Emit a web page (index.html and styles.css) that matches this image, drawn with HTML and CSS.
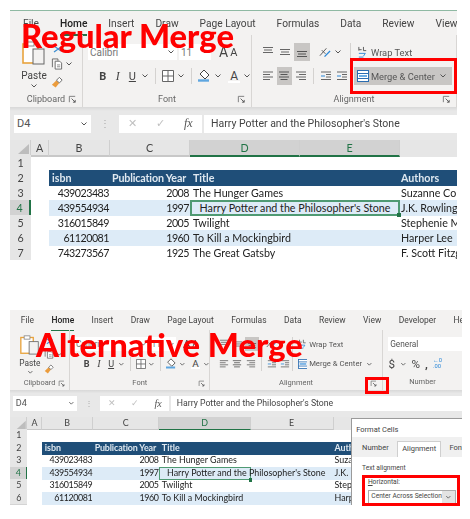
FILE: index.html
```html
<!DOCTYPE html>
<html lang="en">
<head>
<meta charset="utf-8">
<title>Regular Merge and Alternative Merge</title>
<link rel="stylesheet" href="styles.css">
</head>
<body>
<svg class="defs" xmlns="http://www.w3.org/2000/svg">
  <symbol id="chev" viewBox="0 0 8 8"><path d="M1.500 2.500 4 5l2.500-2.500" fill="none" stroke="#555" stroke-width="1"/></symbol>
  <symbol id="launch" viewBox="0 0 10 10"><path d="M1.500 8V1.500H8" fill="none" stroke="#777"/><path d="M4 4l4 4M8 5.500V8H5.500" fill="none" stroke="#555"/></symbol>
  <symbol id="paste" viewBox="0 0 24 26"><rect x="1" y="3" width="15" height="19" fill="#fff" stroke="#e8a33d" stroke-width="1.600"/><rect x="5" y="1" width="7" height="4" fill="#fff" stroke="#888"/><rect x="11" y="8" width="11" height="15" fill="#f3f2f1" stroke="#666"/></symbol>
  <symbol id="cut" viewBox="0 0 10 8"><path d="M1 1l7 5M1 7l7-5" stroke="#3d8fd1" stroke-width="1.300" fill="none"/></symbol>
  <symbol id="copy" viewBox="0 0 12 13"><path d="M1 10V1h6v2" fill="none" stroke="#666"/><path d="M4 3.500h5l2 2V12H4z" fill="#fff" stroke="#666"/><path d="M6 7.500h3.500M6 9.500h3.500" stroke="#888"/></symbol>
  <symbol id="brush" viewBox="0 0 14 14"><path d="M1 10l5-5 3 3-4 5z" fill="#eb9c3c"/><path d="M6 5l3-3 3 3-3 3z" fill="#fff" stroke="#666"/></symbol>
  <symbol id="borders" viewBox="0 0 12 12"><path d="M.500.500h11v11H.500zM6 .500v11M.500 6h11" fill="#fff" stroke="#666"/></symbol>
  <symbol id="fill" viewBox="0 0 13 14"><path d="M6 1l5 5-4 4-5-5z" fill="#fff" stroke="#444"/><path d="M0 11.500h11" stroke="#5ea6e0" stroke-width="2.400"/></symbol>
  <symbol id="ab" viewBox="0 0 11 13"><path d="M1 5V1M1 4h3M6 1v4h3" stroke="#555" fill="none"/><path d="M1 8h7l-2 3M1 12h5" stroke="#2b88d8" fill="none"/></symbol>
  <symbol id="orient" viewBox="0 0 13 12"><path d="M1 10L8 2M3 4l4 4" stroke="#555" fill="none"/><path d="M6 11L12 5" stroke="#2b88d8" stroke-width="1.400"/></symbol>
  <symbol id="merge" viewBox="0 0 12 12"><rect x=".5" y=".5" width="11" height="11" fill="#fff" stroke="#2b6cb0"/><path d="M.500 3.500h11M.500 8.500h11" stroke="#2b6cb0"/><path d="M2 6h8" stroke="#2b88d8" stroke-width="1.400"/></symbol>
  <symbol id="top" viewBox="0 0 12 12"><path d="M1 1.500h10M2 4h8M1 6.500h10" stroke="#666"/></symbol>
  <symbol id="mid" viewBox="0 0 12 12"><path d="M1 3.500h10M2 6h8M1 8.500h10" stroke="#666"/></symbol>
  <symbol id="bot" viewBox="0 0 12 12"><path d="M1 5.500h10M2 8h8M1 10.500h10" stroke="#555"/></symbol>
  <symbol id="left" viewBox="0 0 12 12"><path d="M1 2h10M1 4.500h7M1 7h10M1 9.500h7" stroke="#666"/></symbol>
  <symbol id="center" viewBox="0 0 12 12"><path d="M1 2h10M2.500 4.500h7M1 7h10M2.500 9.500h7" stroke="#555"/></symbol>
  <symbol id="right" viewBox="0 0 12 12"><path d="M1 2h10M4 4.500h7M1 7h10M4 9.500h7" stroke="#666"/></symbol>
  <symbol id="indl" viewBox="0 0 12 12"><path d="M1 2h10M6 4.500h5M6 7h5M1 9.500h10" stroke="#666"/><path d="M1 6h4" stroke="#2b88d8"/></symbol>
  <symbol id="indr" viewBox="0 0 12 12"><path d="M1 2h10M6 4.500h5M6 7h5M1 9.500h10" stroke="#666"/><path d="M1 6h4" stroke="#2b88d8"/></symbol>
  <symbol id="corner" viewBox="0 0 14 12"><path d="M13 1v10H2z" fill="#bdbdbd"/></symbol>
</svg>

<main class="page">
  <section class="figure figure-regular">
    <div class="shot">
      <nav class="tabs"><span>File</span><span class="tab-on">Home</span><span>Insert</span><span>Draw</span><span>Page Layout</span><span>Formulas</span><span>Data</span><span>Review</span><span>View</span></nav>
      <div class="groups">
        <div class="group g-clip">
          <div class="body clip-body">
            <div class="paste"><svg class="i-paste"><use href="#paste"/></svg><span>Paste</span><svg class="i-c"><use href="#chev"/></svg></div>
            <div class="clip-tools"><svg class="i-cut"><use href="#cut"/></svg><div class="tool-row"><svg class="i-12"><use href="#copy"/></svg><svg class="i-c"><use href="#chev"/></svg></div><svg class="i-14"><use href="#brush"/></svg></div>
          </div>
          <div class="label"><span></span><span>Clipboard</span><svg class="launch"><use href="#launch"/></svg></div>
        </div>
        <div class="group g-font">
          <div class="body font-body">
            <div class="frow"><div class="fbox fname">Calibri<svg class="i-c"><use href="#chev"/></svg></div><div class="fbox fsize">11<svg class="i-c"><use href="#chev"/></svg></div><span class="bigA">A</span><span class="smallA">A</span></div>
            <div class="frow frow2"><b class="fmt">B</b><i class="fmt serif">I</i><u class="fmt">U</u><svg class="i-c"><use href="#chev"/></svg><span class="sep"></span><svg class="i-12"><use href="#borders"/></svg><svg class="i-c"><use href="#chev"/></svg><span class="sep"></span><svg class="i-14"><use href="#fill"/></svg><svg class="i-c"><use href="#chev"/></svg><span class="colorA">A</span><svg class="i-c"><use href="#chev"/></svg></div>
          </div>
          <div class="label"><span></span><span>Font</span><svg class="launch"><use href="#launch"/></svg></div>
        </div>
        <div class="group g-align">
          <div class="body align-body">
            <div class="align-icons">
              <div class="arow"><span class="ib"><svg class="i-12"><use href="#top"/></svg></span><span class="ib"><svg class="i-12"><use href="#mid"/></svg></span><span class="ib ib-on"><svg class="i-12"><use href="#bot"/></svg></span><span class="ib ib-gap"><svg class="i-12"><use href="#orient"/></svg></span><svg class="i-c"><use href="#chev"/></svg></div>
              <div class="arow"><span class="ib"><svg class="i-12"><use href="#left"/></svg></span><span class="ib ib-on"><svg class="i-12"><use href="#center"/></svg></span><span class="ib"><svg class="i-12"><use href="#right"/></svg></span><span class="sep"></span><span class="ib"><svg class="i-12"><use href="#indl"/></svg></span><span class="ib"><svg class="i-12"><use href="#indr"/></svg></span></div>
            </div>
            <span class="sep sep-tall"></span>
            <div class="align-cmds">
              <div class="cmd"><svg class="i-12"><use href="#ab"/></svg>Wrap Text</div>
              <div class="cmd cmd-on"><svg class="i-12"><use href="#merge"/></svg>Merge &amp; Center<svg class="i-c cmd-c"><use href="#chev"/></svg></div>
            </div>
          </div>
          <div class="label"><span></span><span>Alignment</span><svg class="launch"><use href="#launch"/></svg></div>
        </div>
      </div>
      <div class="fbar">
        <div class="namebox">D4<svg class="i-c"><use href="#chev"/></svg></div>
        <span class="dots">⋮</span>
        <div class="fxbox"><span>✕</span><span>✓</span><i>fx</i></div>
        <div class="formula">Harry Potter and the Philosopher's Stone</div>
      </div>
      <div class="row colhead"><span class="cnr"><svg class="i-corner"><use href="#corner"/></svg></span><span>A</span><span>B</span><span>C</span><span class="col-on">D</span><span class="col-on">E</span><span class="col-end"></span></div>
      <div class="row"><span class="rh">1</span></div>
      <div class="row thead"><span class="rh">2</span><span></span><span>isbn</span><span>Publication Year</span><span class="tx">Title</span><span></span><span class="tx">Authors</span></div>
      <div class="row"><span class="rh">3</span><span></span><span class="num">439023483</span><span class="num">2008</span><span class="tx">The Hunger Games</span><span></span><span class="tx">Suzanne Collins</span></div>
      <div class="row band"><span class="rh rh-on">4</span><span></span><span class="num">439554934</span><span class="num">1997</span><span class="sel sel-wide">Harry Potter and the Philosopher's Stone</span><span class="tx">J.K. Rowling, Mary</span></div>
      <div class="row"><span class="rh">5</span><span></span><span class="num">316015849</span><span class="num">2005</span><span class="tx">Twilight</span><span></span><span class="tx">Stephenie Meyer</span></div>
      <div class="row band"><span class="rh">6</span><span></span><span class="num">61120081</span><span class="num">1960</span><span class="tx">To Kill a Mockingbird</span><span></span><span class="tx">Harper Lee</span></div>
      <div class="row"><span class="rh">7</span><span></span><span class="num">743273567</span><span class="num">1925</span><span class="tx">The Great Gatsby</span><span></span><span class="tx">F. Scott Fitzgerald</span></div>
    </div>
    <div class="overlay-title title-regular">Regular Merge</div>
    <div class="redbox box-merge"></div>
  </section>

  <section class="figure figure-alt">
    <div class="shot">
      <nav class="tabs"><span>File</span><span class="tab-on">Home</span><span>Insert</span><span>Draw</span><span>Page Layout</span><span>Formulas</span><span>Data</span><span>Review</span><span>View</span><span>Developer</span><span>Help</span></nav>
      <div class="groups">
        <div class="group g-clip">
          <div class="body clip-body">
            <div class="paste"><svg class="i-paste"><use href="#paste"/></svg><span>Paste</span><svg class="i-c"><use href="#chev"/></svg></div>
            <div class="clip-tools"><svg class="i-cut"><use href="#cut"/></svg><div class="tool-row"><svg class="i-12"><use href="#copy"/></svg><svg class="i-c"><use href="#chev"/></svg></div><svg class="i-14"><use href="#brush"/></svg></div>
          </div>
          <div class="label"><span></span><span>Clipboard</span><svg class="launch"><use href="#launch"/></svg></div>
        </div>
        <div class="group g-font">
          <div class="body font-body">
            <div class="frow"><div class="fbox fname">Calibri<svg class="i-c"><use href="#chev"/></svg></div><div class="fbox fsize">11<svg class="i-c"><use href="#chev"/></svg></div><span class="bigA">A</span><span class="smallA">A</span></div>
            <div class="frow frow2"><b class="fmt">B</b><i class="fmt serif">I</i><u class="fmt">U</u><svg class="i-c"><use href="#chev"/></svg><span class="sep"></span><svg class="i-12"><use href="#borders"/></svg><svg class="i-c"><use href="#chev"/></svg><span class="sep"></span><svg class="i-14"><use href="#fill"/></svg><svg class="i-c"><use href="#chev"/></svg><span class="colorA">A</span><svg class="i-c"><use href="#chev"/></svg></div>
          </div>
          <div class="label"><span></span><span>Font</span><svg class="launch"><use href="#launch"/></svg></div>
        </div>
        <div class="group g-align">
          <div class="body align-body">
            <div class="align-icons">
              <div class="arow"><span class="ib"><svg class="i-12"><use href="#top"/></svg></span><span class="ib"><svg class="i-12"><use href="#mid"/></svg></span><span class="ib ib-on"><svg class="i-12"><use href="#bot"/></svg></span><span class="ib ib-gap"><svg class="i-12"><use href="#orient"/></svg></span><svg class="i-c"><use href="#chev"/></svg></div>
              <div class="arow"><span class="ib"><svg class="i-12"><use href="#left"/></svg></span><span class="ib"><svg class="i-12"><use href="#center"/></svg></span><span class="ib"><svg class="i-12"><use href="#right"/></svg></span><span class="sep"></span><span class="ib"><svg class="i-12"><use href="#indl"/></svg></span><span class="ib"><svg class="i-12"><use href="#indr"/></svg></span></div>
            </div>
            <span class="sep sep-tall"></span>
            <div class="align-cmds">
              <div class="cmd"><svg class="i-12"><use href="#ab"/></svg>Wrap Text</div>
              <div class="cmd"><svg class="i-12"><use href="#merge"/></svg>Merge &amp; Center<svg class="i-c cmd-c"><use href="#chev"/></svg></div>
            </div>
          </div>
          <div class="label"><span></span><span>Alignment</span><svg class="launch"><use href="#launch"/></svg></div>
        </div>
        <div class="group g-num">
          <div class="body num-body">
            <div class="fbox nformat">General</div>
            <div class="nrow"><span>$</span><svg class="i-c"><use href="#chev"/></svg><span>%</span><b>,</b><span class="nsmall">←0<br>.00</span></div>
          </div>
          <div class="label label-plain">Number</div>
        </div>
      </div>
      <div class="fbar">
        <div class="namebox">D4<svg class="i-c"><use href="#chev"/></svg></div>
        <span class="dots">⋮</span>
        <div class="fxbox"><span>✕</span><span>✓</span><i>fx</i></div>
        <div class="formula">Harry Potter and the Philosopher's Stone</div>
      </div>
      <div class="row colhead"><span class="cnr"><svg class="i-corner"><use href="#corner"/></svg></span><span>A</span><span>B</span><span>C</span><span class="col-on">D</span><span>E</span><span class="col-end"></span></div>
      <div class="row"><span class="rh">1</span></div>
      <div class="row thead"><span class="rh">2</span><span></span><span>isbn</span><span>Publication Year</span><span class="tx">Title</span><span></span><span class="tx">Authors</span></div>
      <div class="row"><span class="rh">3</span><span></span><span class="num">439023483</span><span class="num">2008</span><span class="tx">The Hunger Games</span><span></span><span class="tx">Suzanne Collins</span></div>
      <div class="row band"><span class="rh rh-on">4</span><span></span><span class="num">439554934</span><span class="num">1997</span><span class="sel sel-narrow">Harry Potter and the Philosopher's Stone</span><span></span><span class="tx">J.K. Rowling, Mary</span></div>
      <div class="row"><span class="rh">5</span><span></span><span class="num">316015849</span><span class="num">2005</span><span class="tx">Twilight</span><span></span><span class="tx">Stephenie Meyer</span></div>
      <div class="row band"><span class="rh">6</span><span></span><span class="num">61120081</span><span class="num">1960</span><span class="tx">To Kill a Mockingbird</span><span></span><span class="tx">Harper Lee</span></div>
      <aside class="dialog">
        <div class="dlg-title">Format Cells</div>
        <div class="dlg-tabs"><span>Number</span><span class="dlg-tab-on">Alignment</span><span>Font</span></div>
        <div class="dlg-body">
          <div class="dlg-legend">Text alignment</div>
          <div class="dlg-field"><u>H</u>orizontal:</div>
          <div class="dlg-select"><span>Center Across Selection</span><span class="dlg-arrow"><svg class="i-c"><use href="#chev"/></svg></span></div>
        </div>
      </aside>
    </div>
    <div class="overlay-title title-regular">Alternative Merge</div>
    <div class="redbox box-launch"></div>
    <div class="redbox box-select"></div>
  </section>
</main>
</body>
</html>
```
FILE: styles.css
```css
* { box-sizing: border-box; }
html, body { margin: 0; background: #fff; }
.defs { display: none; }
body { width: 470px; height: 519px; overflow: hidden; font-family: Roboto, "Open Sans", sans-serif; color: #444; }
.page { display: flex; flex-direction: column; padding: 10px 0 0 10px; gap: 50px; }
.figure { position: relative; }
.figure-regular { width: 447px; height: 250px; }
.figure-alt { width: 452px; height: 195px; }
.shot { position: relative; overflow: hidden; filter: blur(.4px); width: 447px; }
.figure-regular .shot { height: 250px; border-top: 1px solid #8fb9a3; }
.figure-alt .shot { zoom: .83; width: 545px; height: 235px; }

.tabs { display: flex; gap: 21px; height: 24px; padding: 5px 0 0 13px; background: #f3f2f1; font-size: 10.200px; line-height: 15px; white-space: nowrap; }
.tab-on { color: #222; font-weight: 500; border-bottom: 2px solid #217346; height: 20px; }

.groups { display: flex; height: 72px; background: #f3f2f1; }
.group { display: flex; flex-direction: column; border-right: 1px solid #d8d6d4; }
.body { flex: 1; min-height: 0; display: flex; }
.label { display: grid; grid-template-columns: 10px 1fr 10px; align-items: center; height: 15px; padding: 0 4px; font-size: 9px; line-height: 13px; color: #666; text-align: center; }
.label-plain { display: block; }
.launch { width: 9px; height: 9px; }
.i-c { width: 8px; height: 8px; flex: none; }
.i-12 { width: 12px; height: 12px; flex: none; }
.i-14 { width: 13px; height: 14px; flex: none; }

.g-clip { width: 73px; }
.clip-body { padding: 6px 0 0 11px; gap: 4px; }
.paste { display: flex; flex-direction: column; align-items: center; width: 26px; font-size: 10px; line-height: 13px; }
.i-paste { width: 24px; height: 26px; margin-bottom: 2px; }
.clip-tools { display: flex; flex-direction: column; gap: 5px; padding-top: 4px; }
.i-cut { width: 10px; height: 8px; margin-left: 2px; }
.tool-row { display: flex; align-items: center; gap: 2px; }

.g-font { width: 169px; }
.font-body { flex-direction: column; padding: 8px 0 0 5px; gap: 6px; }
.frow { display: flex; align-items: center; gap: 2px; height: 18px; }
.fbox { display: flex; align-items: center; justify-content: space-between; height: 16px; padding: 0 2px 0 2px; background: #fff; font-size: 10px; color: #777; }
.fname { width: 89px; }
.fsize { width: 32px; }
.bigA { margin-left: 6px; font-size: 14px; }
.smallA { font-size: 11px; }
.frow2 { padding-left: 9px; gap: 3px; font-size: 11px; }
.fmt { width: 14px; text-align: center; }
.serif { font-family: "Liberation Serif", serif; font-size: 12px; }
.sep { width: 1px; height: 16px; margin: 0 3px; background: #d4d2d0; flex: none; }
.colorA { width: 14px; margin-left: 3px; text-align: center; font-size: 12px; background: linear-gradient(#f3f2f1 85%, #fff 85%); }

.g-align { width: 205px; }
.figure-alt .g-align { width: 209px; }
.align-body { padding: 8px 0 0 8px; }
.align-icons { display: flex; flex-direction: column; gap: 6px; width: 90px; }
.arow { display: flex; align-items: center; height: 18px; gap: 1px; }
.ib { display: flex; align-items: center; justify-content: center; width: 16px; height: 18px; }
.ib-on { background: #c8c6c4; }
.ib-gap { margin-left: 6px; }
.sep-tall { height: 42px; margin: 0 3px 0 0; }
.align-cmds { display: flex; flex-direction: column; gap: 6px; margin-left: 0; }
.cmd { display: flex; align-items: center; gap: 2px; width: 98px; height: 18px; padding: 0 3px; font-size: 9.300px; white-space: nowrap; color: #555; }
.cmd-on { background: #c8c6c4; }
.cmd-c { margin-left: auto; margin-right: 2px; }

.g-num { width: 96px; border-right: 0; }
.num-body { flex-direction: column; padding: 8px 0 0 7px; gap: 6px; }
.nformat { width: 90px; height: 18px; justify-content: flex-start; color: #555; }
.nrow { display: flex; align-items: center; gap: 6px; font-size: 14px; height: 18px; }
.nsmall { font-size: 7px; line-height: 7px; color: #2b88d8; }

.fbar { display: flex; align-items: center; gap: 2px; height: 33px; padding: 0 0 0 4px; background: linear-gradient(#d8d8d8, #e8e8e8 4px); font-size: 11px; }
.namebox { display: flex; align-items: center; justify-content: space-between; width: 77px; height: 18px; padding: 0 3px; background: #fff; color: #555; }
.dots { width: 24px; text-align: center; color: #aaa; font-size: 10px; }
.fxbox { display: flex; align-items: center; justify-content: space-around; width: 83px; height: 18px; background: #fff; color: #c0c0c0; }
.fxbox i { font-family: "Liberation Serif", serif; font-size: 12px; color: #555; }
.formula { flex: 1; height: 18px; line-height: 18px; padding-left: 7px; background: #fff; color: #444; font-size: 10.500px; white-space: nowrap; overflow: hidden; }

.row { display: grid; grid-template-columns: 21px 18px 61px 80px 110px 100px 1fr; height: 15px; font-family: Lato, Carlito, sans-serif; font-size: 10.700px; line-height: 15px; color: #222; white-space: nowrap; }
.row > span { min-width: 0; }
.rh { background: #e6e6e6; text-align: center; color: #444; border-bottom: 1px solid #d4d4d4; }
.rh-on { background: #d2d2d2; border-right: 2px solid #217346; color: #217346; }
.colhead { background: #e6e6e6; text-align: center; color: #444; }
.colhead > span { border-right: 1px solid #cfcfcf; border-bottom: 2px solid #c8c8c8; }
.colhead > .col-on { background: #d2d2d2; color: #217346; border-bottom-color: #217346; }
.colhead > .col-end { border-right: 0; border-bottom-color: #e6e6e6; }
.cnr { display: flex; justify-content: flex-end; align-items: flex-end; }
.i-corner { width: 14px; height: 12px; }
.thead > span:nth-child(n+3) { background: #1f4e78; color: #dfe8f0; font-weight: 700; }
.thead > span:nth-child(3) { padding-left: 3px; }
.thead > span:nth-child(4) { padding-left: 2px; letter-spacing: -.15px; }
.tx { padding-left: 3px; overflow: hidden; }
.row > .tx:nth-child(7), .band > .tx:nth-child(6) { padding-left: 1px; }
.num { text-align: right; padding-right: 1px; letter-spacing: -.5px; }
.band > span:nth-child(n+3) { background: #ddebf7; }
.sel { border: 2px solid #4f9a73; line-height: 12px; text-align: center; position: relative; }
.sel::after { content: ""; position: absolute; right: -3px; bottom: -3px; width: 4px; height: 4px; background: #217346; }
.sel-wide { grid-column: span 2; }
.row > .sel-narrow { text-align: left; padding-left: 8px; overflow: visible; }

.dialog { position: absolute; left: 411px; top: 130px; width: 140px; height: 110px; background: #fff; border: 1px solid #9a9a9a; border-right: 0; font-size: 9px; color: #444; white-space: nowrap; }
.dlg-title { height: 22px; padding: 6px 0 0 5px; line-height: 14px; }
.dlg-tabs { display: flex; gap: 14px; height: 24px; padding: 5px 0 0 12px; background: #f0f0f0; line-height: 17px; }
.dlg-tab-on { background: #fff; border: 1px solid #cfcfcf; border-bottom: 0; padding: 0 5px; margin: 0 -4px; }
.dlg-body { padding: 7px 0 0 12px; font-size: 8px; line-height: 13px; }
.dlg-field { margin: 4px 0 3px 7px; }
.dlg-select { display: flex; justify-content: space-between; align-items: center; width: 106px; height: 16px; margin-left: 7px; padding-left: 3px; border: 1px solid #ababab; }
.dlg-arrow { display: flex; align-items: center; justify-content: center; width: 15px; height: 14px; background: #e3e3e3; }

.overlay-title { position: absolute; color: #f00; font-family: Lato, sans-serif; font-weight: 900; font-size: 32.700px; white-space: nowrap; line-height: 1; }
.title-regular { left: 11px; top: 10px; }
.figure-alt .title-regular { left: 26px; top: 19px; }
.redbox { position: absolute; border: 3px solid #f00; }
.box-merge { left: 340px; top: 48px; width: 107px; height: 36px; }
.box-launch { left: 355px; top: 67px; width: 24px; height: 17px; }
.box-select { left: 352px; top: 165px; width: 98px; height: 31px; }
```
